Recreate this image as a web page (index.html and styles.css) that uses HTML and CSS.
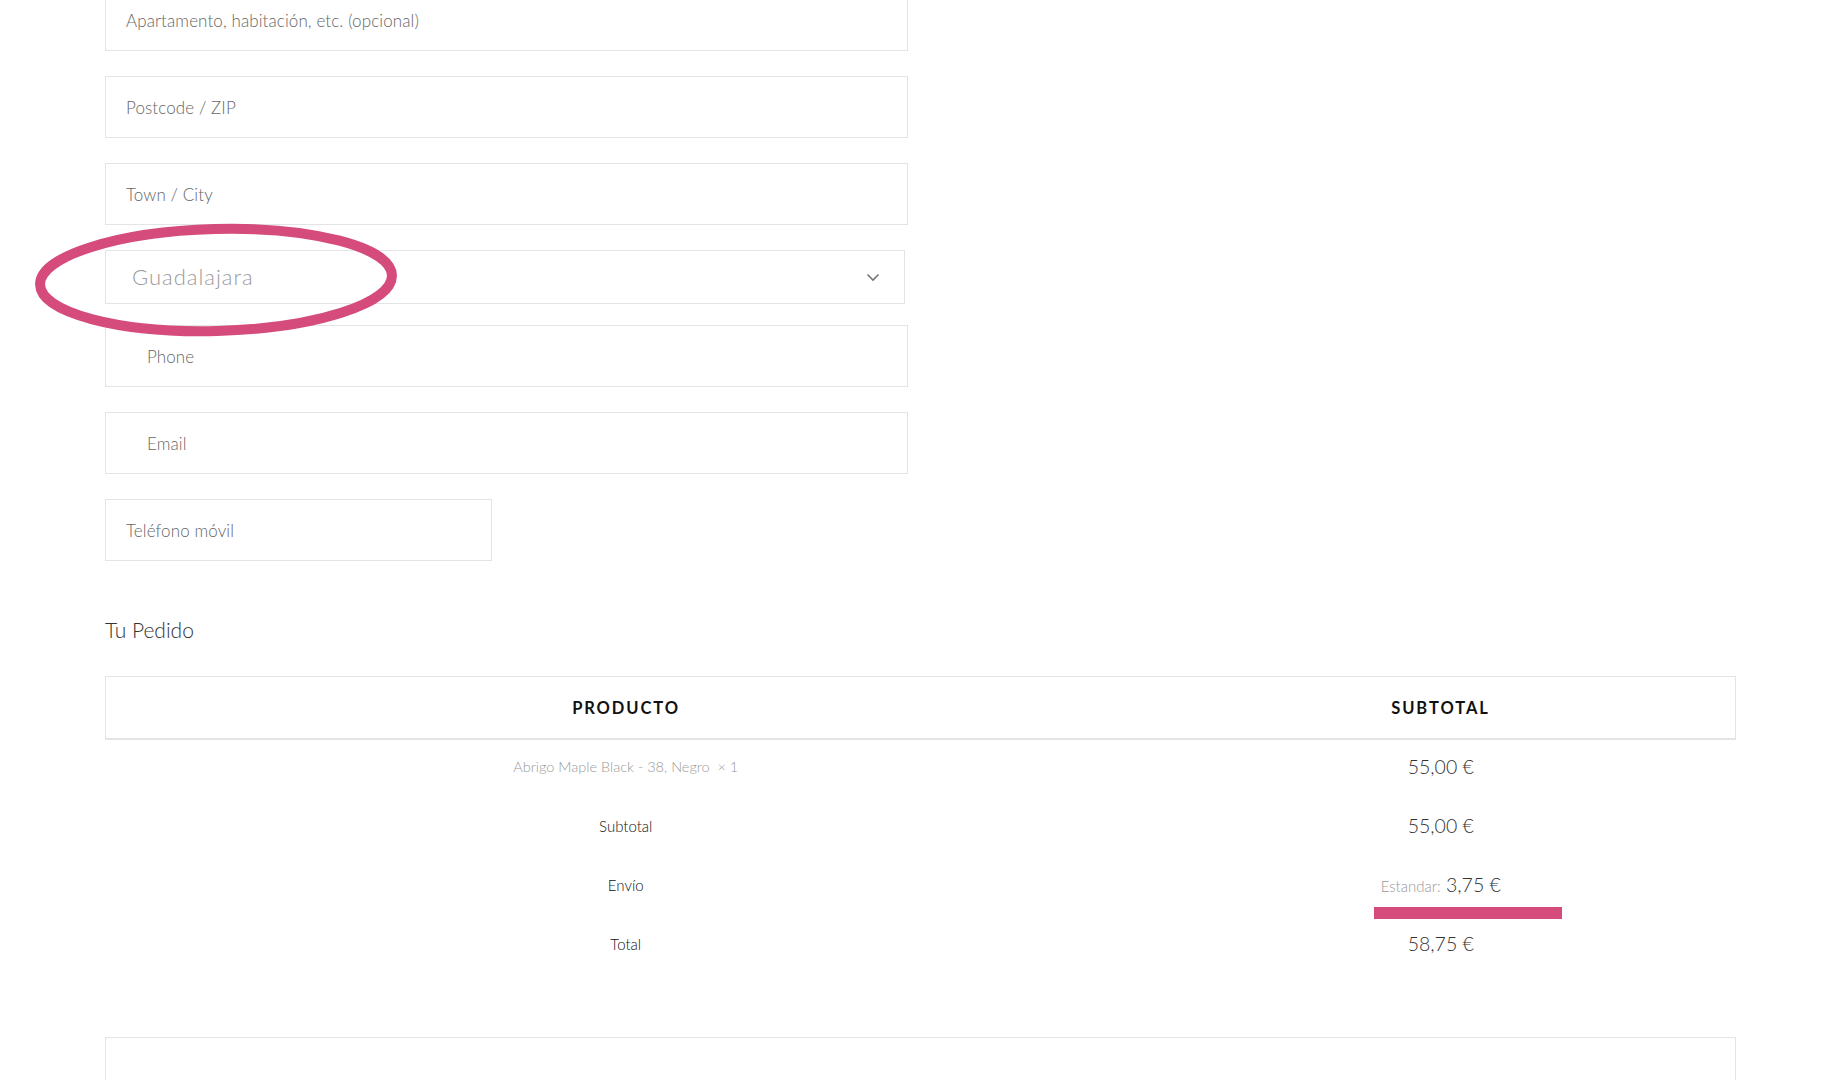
FILE: index.html
```html
<!DOCTYPE html>
<html lang="es">
<head>
<meta charset="utf-8">
<title>Checkout</title>
<link rel="stylesheet" href="styles.css">
</head>
<body>
<div class="page">
  <div class="form">
    <div class="field"><span class="ph">Apartamento, habitación, etc. (opcional)</span></div>
    <div class="field"><span class="ph">Postcode / ZIP</span></div>
    <div class="field"><span class="ph">Town / City</span></div>
    <div class="select-wrap">
      <div class="select">
        <span class="sel-value">Guadalajara</span>
        <svg class="chevron" width="14" height="9" viewBox="0 0 14 9"><path d="M1.5 1.5 L7 7 L12.5 1.5" fill="none" stroke="#777" stroke-width="1.6"/></svg>
      </div>
      <svg class="ring" width="370" height="118" viewBox="0 0 370 118"><ellipse cx="183" cy="58" rx="176" ry="51" fill="none" stroke="#d44b7c" stroke-width="10" transform="rotate(-1.5 183 58)"/></svg>
    </div>
    <div class="field"><span class="ph indent">Phone</span></div>
    <div class="field"><span class="ph indent">Email</span></div>
    <div class="field short"><span class="ph">Teléfono móvil</span></div>
  </div>

  <h3 class="title">Tu Pedido</h3>

  <table class="order">
    <thead>
      <tr><th class="c1">PRODUCTO</th><th class="c2">SUBTOTAL</th></tr>
    </thead>
    <tbody>
      <tr><td class="c1 prod">Abrigo Maple Black - 38, Negro &nbsp;× 1</td><td class="c2 price">55,00 €</td></tr>
      <tr><td class="c1 label">Subtotal</td><td class="c2 price">55,00 €</td></tr>
      <tr><td class="c1 label">Envío</td><td class="c2 price ship"><span class="small">Estandar:</span> 3,75 €<span class="mark"></span></td></tr>
      <tr><td class="c1 label">Total</td><td class="c2 price">58,75 €</td></tr>
    </tbody>
  </table>

  <div class="payment"></div>
</div>
</body>
</html>
```
FILE: styles.css
```css
html, body {
  margin: 0;
  padding: 0;
  background: #ffffff;
}
body {
  font-family: "Lato", "Open Sans", sans-serif;
  color: #333;
  overflow: hidden;
  height: 1080px;
}
.page {
  padding-left: 105px;
  width: 1631px;
}
.form {
  display: flex;
  flex-direction: column;
  gap: 25px;
  margin-top: -11px;
  width: 803px;
}
.field {
  box-sizing: border-box;
  height: 62px;
  border: 1px solid #e4e4e4;
  display: flex;
  align-items: center;
  padding-left: 20px;
}
.field.short {
  width: 387px;
}
.ph {
  font-size: 17px;
  color: #666;
  font-weight: 300;
  letter-spacing: 0.1px;
}
.ph.indent {
  padding-left: 21px;
}
.select-wrap {
  position: relative;
  margin-bottom: -4px;
}
.select {
  box-sizing: border-box;
  height: 54px;
  width: 800px;
  border: 1px solid #e4e4e4;
  display: flex;
  align-items: center;
  justify-content: space-between;
  padding-left: 26px;
  padding-right: 24px;
}
.sel-value {
  font-size: 22px;
  color: #9a9a9a;
  letter-spacing: 1px;
  font-weight: 300;
  margin-top: -2px;
}
.chevron {
  display: block;
}
.ring {
  position: absolute;
  left: -72px;
  top: -28px;
  pointer-events: none;
}
.title {
  margin: 57px 0 34px 0;
  font-size: 21px;
  line-height: 24px;
  font-weight: 300;
  color: #333;
}
.order {
  width: 1631px;
  border-collapse: collapse;
}
.order th {
  height: 59px;
  border-top: 1px solid #e4e4e4;
  border-bottom: 2px solid #e4e4e4;
  font-size: 16.5px;
  font-weight: 700;
  letter-spacing: 1.9px;
  color: #111;
}
.order th.c1 {
  border-left: 1px solid #e4e4e4;
}
.order th.c2 {
  border-right: 1px solid #e4e4e4;
}
.c1 {
  width: 1038px;
  text-align: center;
}
.c2 {
  text-align: center;
}
.order td {
  height: 53px;
  padding: 0 0 6px 0;
}
.prod {
  font-size: 14.5px;
  color: #9a9a9a;
  font-weight: 300;
}
.label {
  font-size: 15px;
  color: #111;
  font-weight: 300;
}
.price {
  font-size: 19.5px;
  color: #333;
  font-weight: 300;
}
.ship {
  position: relative;
}
.small {
  font-size: 15px;
  color: #999;
}
.mark {
  position: absolute;
  left: 228px;
  top: 49px;
  width: 188px;
  height: 12px;
  background: #d44b7c;
}
.payment {
  margin-top: 61px;
  height: 80px;
  border: 1px solid #e4e4e4;
  border-bottom: none;
}
```
